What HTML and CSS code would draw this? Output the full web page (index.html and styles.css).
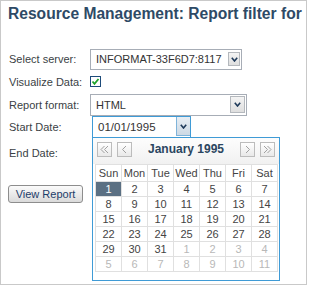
FILE: index.html
```html
<html>
<head>
	<meta charset="utf-8" />
	<title>Resource Management</title>
	<link rel="stylesheet" href="styles.css">
</head>
<body>
	<div class="page">
		<h1 class="title">Resource Management: Report filter for</h1>
		<div class="form">
			<div class="row r1">
				<label>Select server:</label>
				<div class="select sel-server">
					<span class="select-text">INFORMAT-33F6D7:8117</span>
					<span class="arrow"><svg width="7" height="5" viewBox="0 0 7 5"><polyline points="0.8,0.8 3.5,4 6.2,0.8" fill="none" stroke="#1f3a5a" stroke-width="1.6"/></svg></span>
				</div>
			</div>
			<div class="row r2">
				<label>Visualize Data:</label>
				<span class="checkbox"><svg width="9" height="9" viewBox="0 0 9 9"><polyline points="1.5,4.5 3.5,6.8 7.5,2" fill="none" stroke="#1fa32a" stroke-width="1.8"/></svg></span>
			</div>
			<div class="row r3">
				<label>Report format:</label>
				<div class="select sel-format">
					<span class="select-text">HTML</span>
					<span class="arrow"><svg width="7" height="5" viewBox="0 0 7 5"><polyline points="0.8,0.8 3.5,4 6.2,0.8" fill="none" stroke="#1f3a5a" stroke-width="1.6"/></svg></span>
				</div>
			</div>
			<div class="row r4">
				<label>Start Date:</label>
				<div class="date">
					<span class="date-text">01/01/1995</span>
					<span class="date-btn"><svg width="7" height="5" viewBox="0 0 7 5"><polyline points="0.8,0.8 3.5,4 6.2,0.8" fill="none" stroke="#1f3a5a" stroke-width="1.6"/></svg></span>

					<div class="calendar">
						<div class="cal-head">
							<span class="nav"><svg width="9" height="9" viewBox="0 0 9 9"><polyline points="4.5,1 1,4.5 4.5,8" fill="none" stroke="#a0a0a0"/><polyline points="8,1 4.5,4.5 8,8" fill="none" stroke="#a0a0a0"/></svg></span>
							<span class="nav"><svg width="9" height="9" viewBox="0 0 9 9"><polyline points="6,1 2.5,4.5 6,8" fill="none" stroke="#a0a0a0"/></svg></span>
							<span class="month">January 1995</span>
							<span class="nav"><svg width="9" height="9" viewBox="0 0 9 9"><polyline points="3,1 6.5,4.5 3,8" fill="none" stroke="#a0a0a0"/></svg></span>
							<span class="nav"><svg width="9" height="9" viewBox="0 0 9 9"><polyline points="1,1 4.5,4.5 1,8" fill="none" stroke="#a0a0a0"/><polyline points="4.5,1 8,4.5 4.5,8" fill="none" stroke="#a0a0a0"/></svg></span>
						</div>
						<table class="days">
							<tr><th>Sun</th><th>Mon</th><th>Tue</th><th>Wed</th><th>Thu</th><th>Fri</th><th>Sat</th></tr>
							<tr><td class="selected">1</td><td>2</td><td>3</td><td>4</td><td>5</td><td>6</td><td>7</td></tr>
							<tr><td>8</td><td>9</td><td>10</td><td>11</td><td>12</td><td>13</td><td>14</td></tr>
							<tr><td>15</td><td>16</td><td>17</td><td>18</td><td>19</td><td>20</td><td>21</td></tr>
							<tr><td>22</td><td>23</td><td>24</td><td>25</td><td>26</td><td>27</td><td>28</td></tr>
							<tr><td>29</td><td>30</td><td>31</td><td class="other">1</td><td class="other">2</td><td class="other">3</td><td class="other">4</td></tr>
							<tr><td class="other">5</td><td class="other">6</td><td class="other">7</td><td class="other">8</td><td class="other">9</td><td class="other">10</td><td class="other">11</td></tr>
						</table>
					</div>
				</div>
			</div>
			<div class="row r5">
				<label>End Date:</label>
			</div>
			<button class="btn">View Report</button>
		</div>
	</div>
</body>
</html>
```

FILE: styles.css
```css
body {
	margin: 0;
	font-family: "Liberation Sans", Arial, sans-serif;
	font-size: 11px;
	color: #3a3f45;
}

.page {
	width: 305px;
	height: 283px;
	border: 1px solid #c9c9c9;
	overflow: hidden;
}

.title {
	margin: 3px 0 0 7px;
	font-size: 15.6px;
	line-height: 20px;
	font-weight: bold;
	color: #2e4a66;
	white-space: nowrap;
}

.form {
	margin-top: 24px;
	padding-left: 8px;
}

.row {
	display: flex;
	align-items: center;
}

.row label {
	width: 81px;
	flex: none;
}

.r1 { height: 22px; }
.r2 { height: 23px; }
.r3 { height: 23px; }
.r4 { height: 22px; }
.r5 { height: 30px; }

.select {
	box-sizing: border-box;
	display: flex;
	align-items: center;
	justify-content: space-between;
	height: 21px;
	border: 1px solid #a7adb6;
	background: #fff;
	font-size: 11px;
	padding-left: 5px;
	color: #333;
}

.sel-server {
	width: 152px;
	padding-right: 1px;
}

.sel-format {
	width: 157px;
	height: 22px;
	padding-right: 1px;
}

.arrow {
	box-sizing: border-box;
	display: flex;
	align-items: center;
	justify-content: center;
	width: 12px;
	height: 14px;
	border: 1px solid #b4b8bd;
	background: linear-gradient(#f4f4f4, #dedede);
}

.sel-format .arrow {
	width: 15px;
	height: 17px;
}

.checkbox {
	box-sizing: border-box;
	display: flex;
	align-items: center;
	justify-content: center;
	width: 11px;
	height: 11px;
	border: 1px solid #1d4b7a;
	background: #fff;
}

.date {
	position: relative;
	box-sizing: border-box;
	display: flex;
	align-items: center;
	justify-content: space-between;
	width: 99px;
	height: 22px;
	margin-left: 2px;
	border: 1px solid #3f9bd6;
	font-size: 11.5px;
	padding-left: 5px;
	color: #333;
}

.date-btn {
	box-sizing: border-box;
	display: flex;
	align-items: center;
	justify-content: center;
	width: 14px;
	height: 19px;
	align-self: flex-start;
	border-left: 1px solid #7fb4da;
	border-bottom: 1px solid #7fb4da;
	background: linear-gradient(#e8eef4, #cdd9e4);
}

.calendar {
	position: absolute;
	left: -1px;
	top: 20px;
	box-sizing: border-box;
	width: 188px;
	height: 144px;
	border: 1px solid #3f9bd6;
	background: #fff;
	z-index: 2;
}

.cal-head {
	display: flex;
	align-items: flex-start;
	height: 26px;
	box-sizing: border-box;
	padding: 4px 4px 0 4px;
	background: linear-gradient(#fdfdfd, #f1f1f1);
}

.nav {
	box-sizing: border-box;
	display: flex;
	align-items: center;
	justify-content: center;
	width: 15px;
	height: 15px;
	border: 1px solid #bcbcbc;
	background: linear-gradient(#ffffff, #e9e9e9);
}

.nav + .nav {
	margin-left: 5px;
}

.month {
	flex: 1;
	text-align: center;
	font-weight: bold;
	font-size: 12px;
	line-height: 15px;
	color: #2b4660;
}

.days {
	margin-left: 2px;
	width: 183px;
	border-collapse: collapse;
	table-layout: fixed;
}

.days th,
.days td {
	border: 1px solid #e0e0e0;
	padding: 0;
	text-align: center;
	font-weight: normal;
	font-size: 11px;
	color: #444;
}

.days th {
	height: 17px;
}

.days td {
	height: 15px;
}

.days td.selected {
	background: #5b7083;
	color: #fff;
}

.days td.other {
	color: #b8b8b8;
}

.btn {
	box-sizing: border-box;
	display: block;
	width: 75px;
	height: 18px;
	margin: 17px 0 0 -1px;
	padding: 0;
	border: 1px solid #8d8d8d;
	border-radius: 3px;
	background: linear-gradient(#fbfbfb, #dadada);
	font-family: "Liberation Sans", Arial, sans-serif;
	font-size: 11px;
	color: #1d3c69;
}
```
